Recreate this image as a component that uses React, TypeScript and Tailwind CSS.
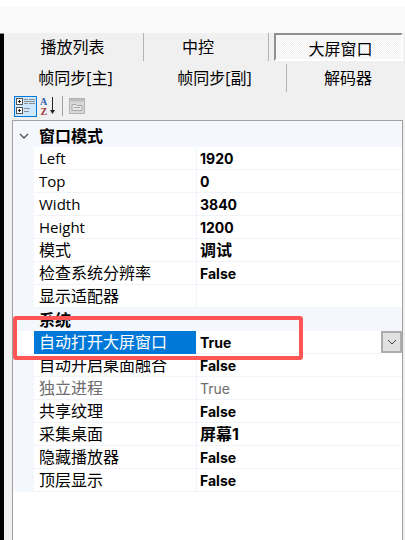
const font = "font-['Open_Sans','Noto_Sans_CJK_SC',sans-serif]";
const valueFont = "font-['Inter','Noto_Sans_CJK_SC',sans-serif]";

function Row({ name, value, disabled, latin, cjk }: { name: string; value?: string; disabled?: boolean; latin?: boolean; cjk?: boolean }) {
  return (
    <div className="flex h-[23px]">
      <div className="w-[21px] bg-[#f4f7fc]" />
      <div
        className={
          "w-[163px] border-r border-b border-[#f0f3fa] pl-[5px] leading-[22px] " +
          (latin ? "text-[15px] " : "") +
          (disabled ? "text-[#6d6d6d]" : "text-black")
        }
      >
        {name}
      </div>
      <div
        className={
          "flex-1 border-b border-[#f0f3fa] pl-[3px] " +
          valueFont +
          (cjk ? " text-[16px] leading-[22px]" : " text-[14px] leading-[24px]") +
          (disabled ? " text-[#6d6d6d]" : " font-bold text-black")
        }
      >
        {value}
      </div>
    </div>
  );
}

function Category({ name, open, height }: { name: string; open?: boolean; height: string }) {
  return (
    <div className={"flex items-end bg-[#f4f7fc] " + height}>
      <div className="flex h-[23px] w-[21px] items-center justify-center">
        {open && (
          <svg width="10" height="6" viewBox="0 0 10 6">
            <path d="M1 1l4 4 4-4" fill="none" stroke="#555" strokeWidth="1.4" />
          </svg>
        )}
      </div>
      <div className="pl-[5px] font-bold leading-[22px] text-black">{name}</div>
    </div>
  );
}

function CategorizedIcon() {
  return (
    <svg width="20" height="16" viewBox="0 0 20 16">
      <rect x="0.5" y="0.5" width="6" height="6" fill="#fff" stroke="#555" />
      <path d="M2 3.5h3M3.5 2v3" stroke="#222" />
      <rect x="0.5" y="9.5" width="6" height="6" fill="#fff" stroke="#555" />
      <path d="M2 12.5h3M3.5 11v3" stroke="#222" />
      <path d="M8 1.5h4M13 1.5h6M8 3.5h11M8 5.5h4M13 5.5h6M8 10.5h6M8 13.5h5" stroke="#8a8f96" />
    </svg>
  );
}

function SortIcon() {
  return (
    <svg width="16" height="20" viewBox="0 0 16 20">
      <text x="0" y="9" fontSize="10" fontWeight="700" fontFamily="Liberation Serif" fill="#2f5fb0">A</text>
      <text x="0.5" y="19" fontSize="10" fontWeight="700" fontFamily="Liberation Serif" fill="#a03030">Z</text>
      <path d="M12.5 1v14" stroke="#222" />
      <path d="M10 14h5l-2.5 4z" fill="#222" />
    </svg>
  );
}

function PagesIcon() {
  return (
    <svg width="16" height="16" viewBox="0 0 16 16">
      <rect x="0.5" y="0.5" width="15" height="15" fill="#d8d8d8" stroke="#b4b4b4" />
      <rect x="1" y="1" width="14" height="2.5" fill="#bdbdbd" />
      <path d="M3 6.5h4l1 1h5v5H3z" fill="#e6e6e6" stroke="#a8a8a8" />
      <path d="M5 9.5h6" stroke="#a8a8a8" />
    </svg>
  );
}

export default function App() {
  return (
    <div className={"flex h-[540px] w-[405px] flex-col overflow-hidden bg-white text-[16px] text-black " + font}>
      <div className="mt-[7px] h-[26px] bg-[#fafafa]" />
      <div className="flex flex-1 bg-[#f0f0f0]">
        <div className="w-[4px] border-t border-[#8a8a8a] bg-black" />
        <div className="flex flex-1 flex-col">
          <div className="flex h-[28px]">
            <div className="w-[140px] border-r border-[#b4b4b4] pr-[2px] pt-px text-center leading-[27px]">播放列表</div>
            <div className="w-[125px] border-r border-[#b4b4b4] pr-[16px] pt-px text-center leading-[27px]">中控</div>
            <div className="ml-[5px] flex-1 border-2 border-[#8f8f8f] border-r-white border-b-white bg-[repeating-conic-gradient(#ffffff_0_25%,#f0f0f0_0_50%)] bg-[length:2px_2px] pl-[4px] text-center leading-[29px]">
              大屏窗口
            </div>
            <div className="w-[2px]" />
          </div>
          <div className="mt-[3px] flex h-[28px]">
            <div className="w-[141px] pl-[2px] pt-px text-center leading-[27px]">帧同步[主]</div>
            <div className="w-[142px] border-r border-[#b4b4b4] pr-[2px] pt-px text-center leading-[27px]">帧同步[副]</div>
            <div className="flex-1 pl-[4px] pt-px text-center leading-[27px]">解码器</div>
          </div>
          <div className="flex h-[28px] items-center pl-[10px]">
            <div className="flex h-[21px] w-[23px] items-center justify-center border border-[#0078d7] bg-[#cce8ff]">
              <CategorizedIcon />
            </div>
            <div className="ml-[3px] w-[16px]">
              <SortIcon />
            </div>
            <div className="ml-[6px] h-[20px] w-px bg-[#a0a0a0]" />
            <div className="ml-[6px]">
              <PagesIcon />
            </div>
          </div>
          <div className="relative ml-[8px] mr-[2px] flex-1 border-x border-t border-[#a0a0a0] bg-white">
            <Category name="窗口模式" open height="h-[26px]" />
            <Row name="Left" value="1920" latin />
            <Row name="Top" value="0" latin />
            <Row name="Width" value="3840" latin />
            <Row name="Height" value="1200" latin />
            <Row name="模式" value="调试" cjk />
            <Row name="检查系统分辨率" value="False" />
            <Row name="显示适配器" />
            <Category name="系统" height="h-[23px]" />
            <div className="flex h-[23px]">
              <div className="w-[21px]" />
              <div className="w-[162px] bg-[#0078d7] pl-[5px] leading-[22px] text-white">自动打开大屏窗口</div>
              <div className={"flex-1 border-b border-[#f0f3fa] pl-[4px] text-[14px] font-bold leading-[24px] " + valueFont}>True</div>
              <div className="flex h-[22px] w-[21px] items-center justify-center border-2 border-[#adadad] bg-[#e1e1e1]">
                <svg width="10" height="6" viewBox="0 0 10 6">
                  <path d="M1 1l4 4 4-4" fill="none" stroke="#444" />
                </svg>
              </div>
            </div>
            <Row name="自动开启桌面融合" value="False" />
            <Row name="独立进程" value="True" disabled />
            <Row name="共享纹理" value="False" />
            <Row name="采集桌面" value="屏幕1" cjk />
            <Row name="隐藏播放器" value="False" />
            <Row name="顶层显示" value="False" />
            <div className="pointer-events-none absolute left-0 top-[195px] h-[44px] w-[290px] rounded-[3px] border-4 border-[#ff5555]" />
          </div>
        </div>
      </div>
    </div>
  );
}
